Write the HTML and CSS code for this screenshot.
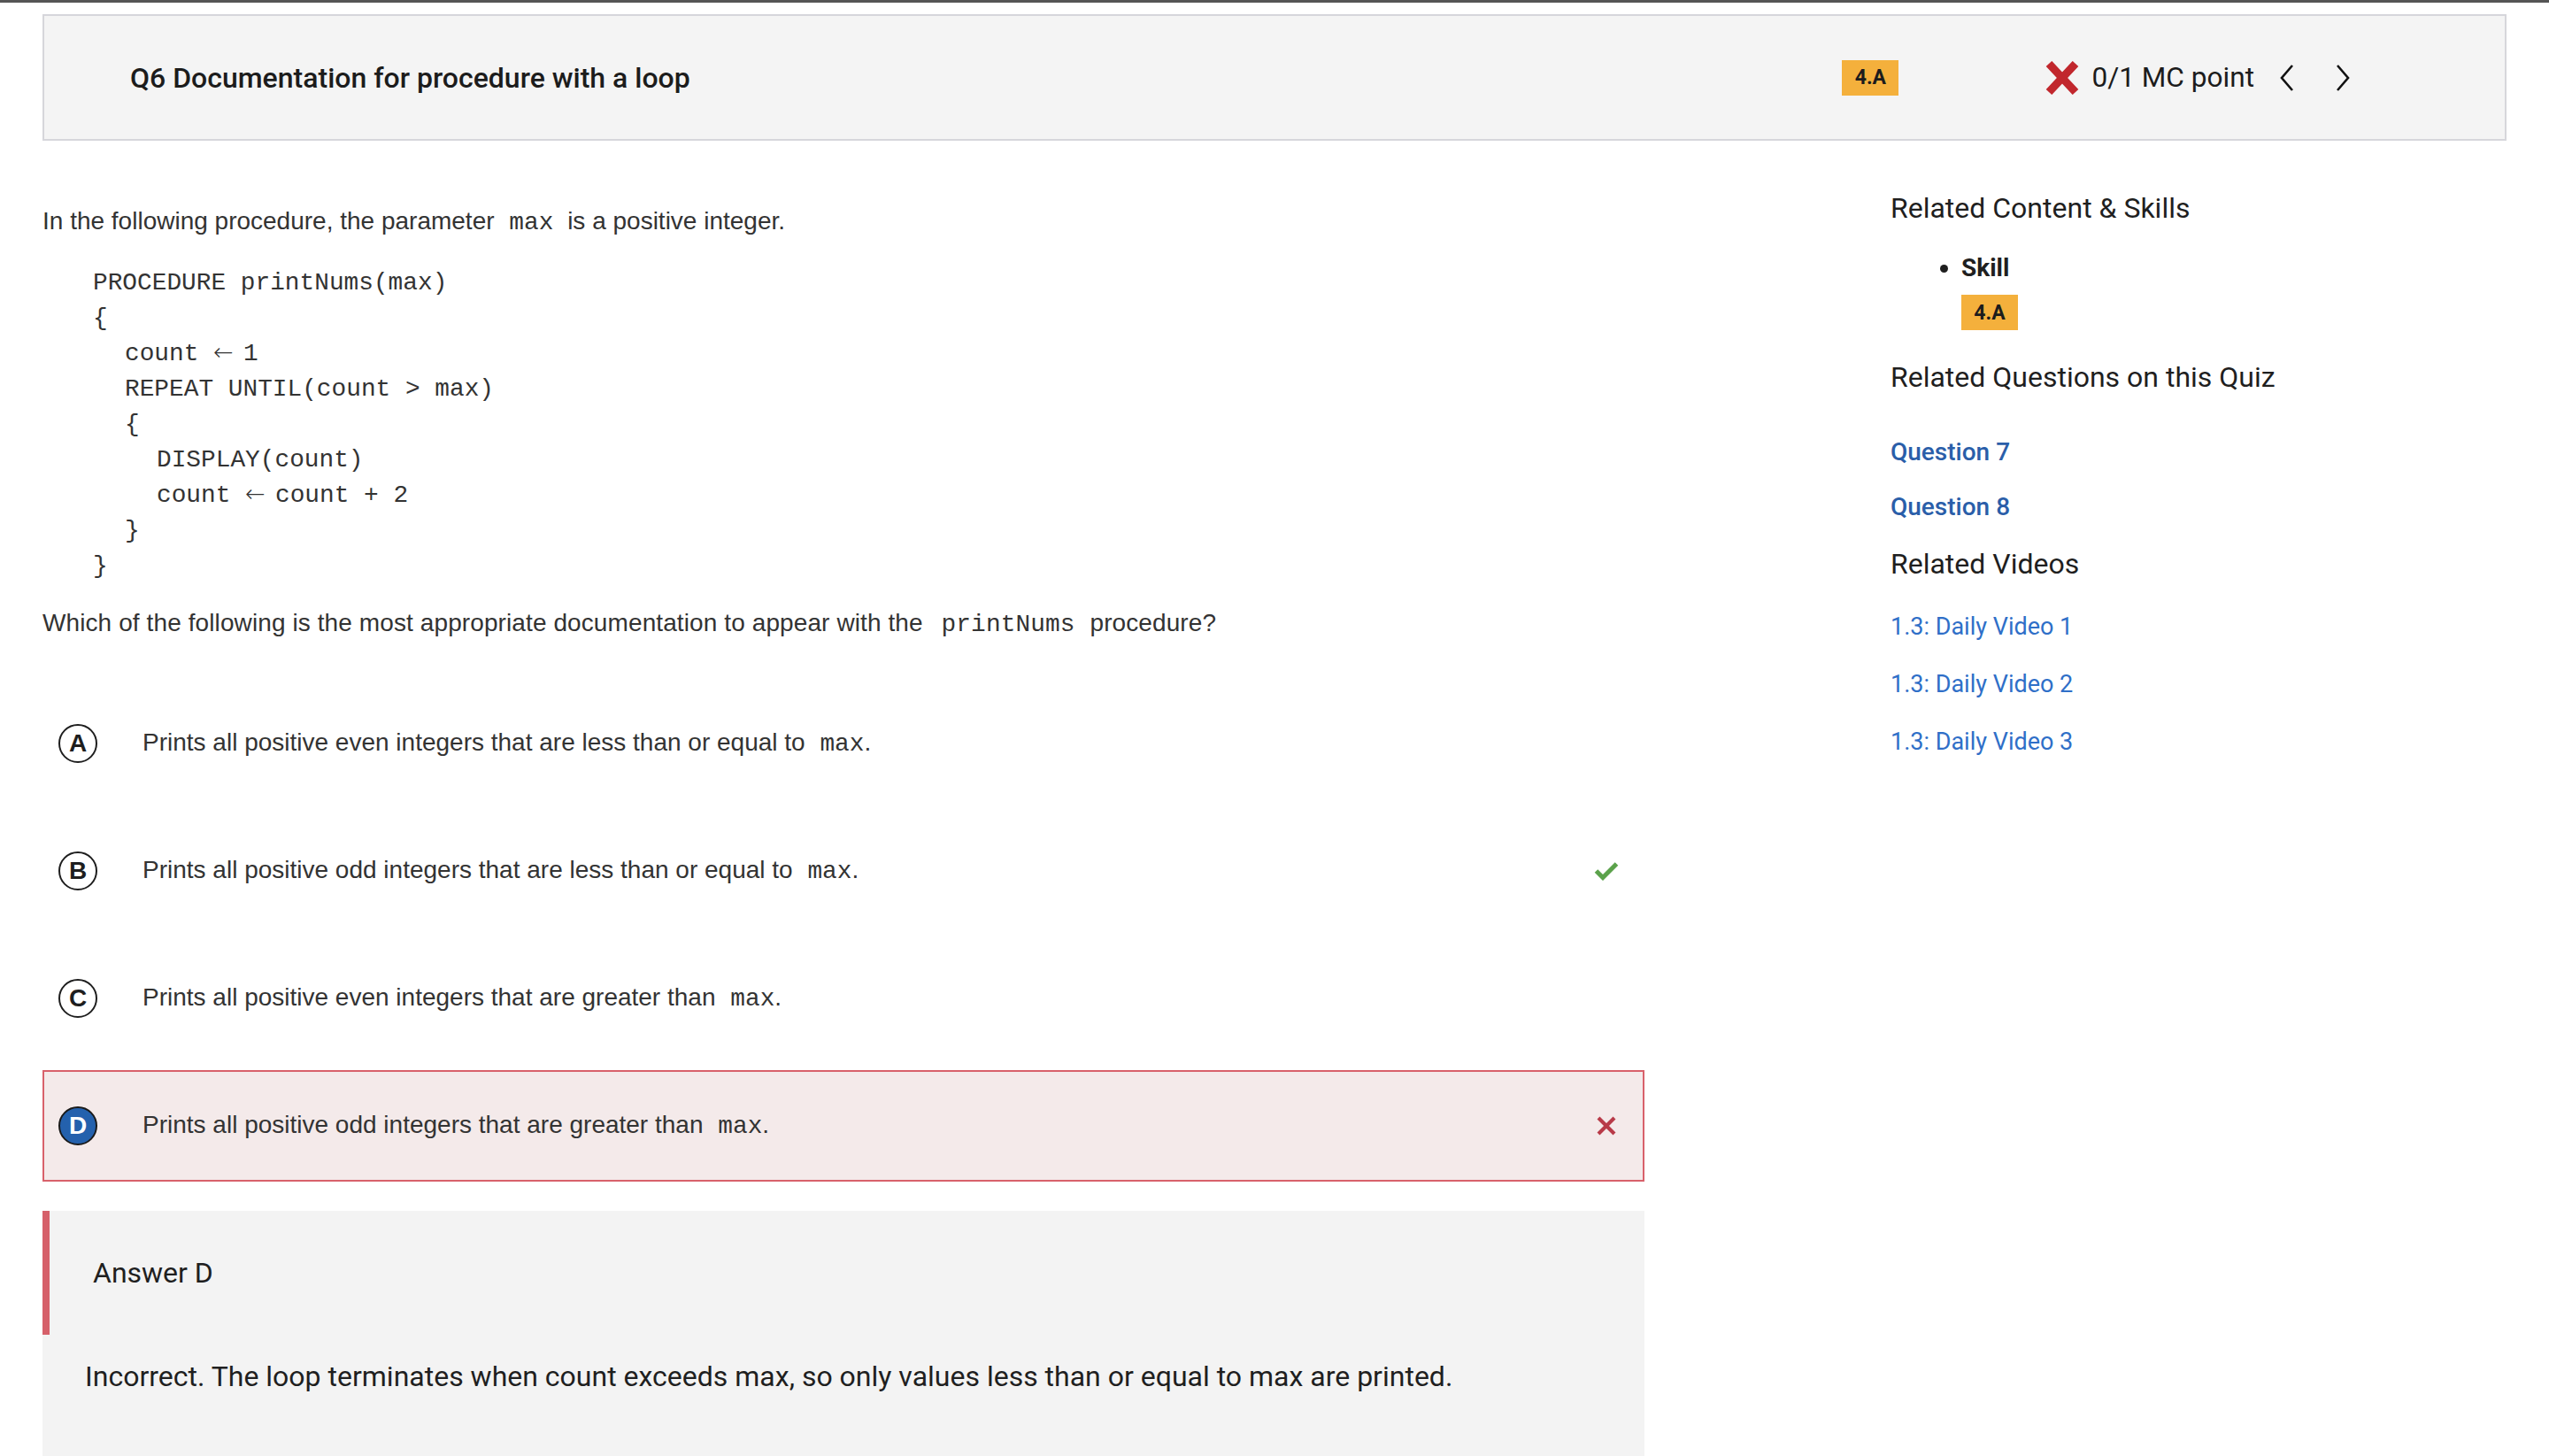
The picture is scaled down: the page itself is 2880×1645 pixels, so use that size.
FILE: index.html
```html
<!DOCTYPE html>
<html lang="en">
<head>
<meta charset="utf-8">
<title>Q6 Documentation for procedure with a loop</title>
<link rel="stylesheet" href="styles.css">
</head>
<body>
<div class="page">
  <header class="qhead">
    <h1 class="qtitle">Q6 Documentation for procedure with a loop</h1>
    <span class="badge badge-head">4.A</span>
    <div class="score">
      <svg class="score-x" width="40" height="38" viewBox="0 0 40 38"><path d="M5 3 L35 35 M35 3 L5 35" stroke="#c1272d" stroke-width="9" fill="none"/></svg>
      <span class="score-text">0/1 MC point</span>
    </div>
    <button class="nav nav-prev" aria-label="Previous"><svg width="18" height="30" viewBox="0 0 18 30"><path d="M15 1 L3 15 L15 29" stroke="#111" stroke-width="2.6" fill="none"/></svg></button>
    <button class="nav nav-next" aria-label="Next"><svg width="18" height="30" viewBox="0 0 18 30"><path d="M3 1 L15 15 L3 29" stroke="#111" stroke-width="2.6" fill="none"/></svg></button>
  </header>

  <div class="layout">
    <main class="question">
      <p class="stem">In the following procedure, the parameter <code class="ic">max</code> is a positive integer.</p>
      <div class="code">
        <div class="cl">PROCEDURE printNums(max)</div>
        <div class="cl">{</div>
        <div class="cl i1">count <span class="arr">←</span> 1</div>
        <div class="cl i1">REPEAT UNTIL(count &gt; max)</div>
        <div class="cl i1">{</div>
        <div class="cl i2">DISPLAY(count)</div>
        <div class="cl i2">count <span class="arr">←</span> count + 2</div>
        <div class="cl i1">}</div>
        <div class="cl">}</div>
      </div>
      <p class="stem ask">Which of the following is the most appropriate documentation to appear with the <code class="ic">printNums</code> procedure?</p>

      <div class="options">
        <div class="opt">
          <span class="letter">A</span>
          <span class="opt-text">Prints all positive even integers that are less than or equal to <code class="ic">max</code>.</span>
        </div>
        <div class="opt">
          <span class="letter">B</span>
          <span class="opt-text">Prints all positive odd integers that are less than or equal to <code class="ic">max</code>.</span>
          <svg class="mark" width="28" height="22" viewBox="0 0 28 22"><path d="M2.5 11 L10 18.5 L25.5 3" stroke="#5ba24b" stroke-width="5" fill="none"/></svg>
        </div>
        <div class="opt">
          <span class="letter">C</span>
          <span class="opt-text">Prints all positive even integers that are greater than <code class="ic">max</code>.</span>
        </div>
        <div class="opt opt-wrong">
          <span class="letter letter-sel">D</span>
          <span class="opt-text">Prints all positive odd integers that are greater than <code class="ic">max</code>.</span>
          <svg class="mark mark-x" width="24" height="22" viewBox="0 0 24 22"><path d="M3 2 L21 20 M21 2 L3 20" stroke="#b83a48" stroke-width="4.2" fill="none"/></svg>
        </div>
      </div>

      <section class="answer">
        <div class="answer-head">Answer D</div>
        <div class="answer-body">Incorrect. The loop terminates when count exceeds max, so only values less than or equal to max are printed.</div>
      </section>
    </main>

    <aside class="side">
      <h2 class="side-h first">Related Content &amp; Skills</h2>
      <ul class="skills">
        <li>Skill</li>
      </ul>
      <span class="badge badge-side">4.A</span>
      <h2 class="side-h h-q">Related Questions on this Quiz</h2>
      <a class="qlink q7" href="#">Question 7</a>
      <a class="qlink q8" href="#">Question 8</a>
      <h2 class="side-h h-v">Related Videos</h2>
      <a class="vlink v1" href="#">1.3: Daily Video 1</a>
      <a class="vlink" href="#">1.3: Daily Video 2</a>
      <a class="vlink" href="#">1.3: Daily Video 3</a>
    </aside>
  </div>
</div>
</body>
</html>
```

FILE: styles.css
```css
html, body {
  margin: 0;
  padding: 0;
  background: #ffffff;
}
body {
  border-top: 3px solid #555555;
  font-family: Roboto, "Liberation Sans", Arial, sans-serif;
  color: #1f1f1f;
  overflow: hidden;
}
.page {
  padding: 13px 48px 0 48px;
}

/* header */
.qhead {
  display: flex;
  align-items: center;
  height: 139px;
  background: #f4f4f4;
  border: 2px solid #d6d6db;
  padding: 0 174px 0 97px;
}
.qtitle {
  flex: 1;
  margin: 0;
  font-size: 32px;
  font-weight: 500;
  color: #1c1c1c;
  line-height: 40px;
}
.badge {
  display: inline-flex;
  align-items: center;
  justify-content: center;
  background: #f4b03c;
  color: #1c1c1c;
  font-family: Roboto, sans-serif;
  font-weight: 700;
  font-size: 23px;
  width: 64px;
  height: 40px;
}
.badge-head {
  margin-right: 165px;
}
.score {
  display: flex;
  align-items: center;
}
.score-x {
  display: block;
  margin-right: 13px;
}
.score-text {
  font-size: 31.6px;
  color: #1c1c1c;
  line-height: 40px;
}
.nav {
  background: none;
  border: 0;
  padding: 0;
  display: flex;
  align-items: center;
}
.nav-prev { margin-left: 28px; }
.nav-next { margin-left: 45px; }

/* main layout */
.layout {
  display: grid;
  grid-template-columns: 65% 25%;
  column-gap: 10%;
  margin-top: 56px;
}

.question {
  padding-top: 15px;
  font-family: "Liberation Sans", Arial, sans-serif;
  color: #333333;
}
.stem {
  margin: 0;
  font-size: 28px;
  line-height: 40px;
}
.ic {
  font-family: "Liberation Mono", "Courier New", monospace;
  font-size: 27.8px;
  padding: 0 8px 0 9px;
  color: #333;
}
.ask .ic {
  padding: 0 9px 0 13px;
}
.ask {
  margin-top: 24px;
  letter-spacing: 0.1px;
}
.opt-text .ic {
  padding-right: 0;
}
.code {
  margin-top: 28px;
  padding-left: 57px;
  font-family: "Liberation Mono", "Courier New", monospace;
  font-size: 27.8px;
  line-height: 40px;
  color: #333333;
}
.cl {
  white-space: pre;
  height: 40px;
}
.cl.i1 { padding-left: 36px; }
.cl.i2 { padding-left: 72px; }
.arr {
  display: inline-block;
  width: 1ch;
  font-family: "DejaVu Sans", sans-serif;
  font-size: 27px;
  font-weight: 300;
  line-height: 1;
  overflow: visible;
  white-space: nowrap;
}

.options {
  margin-top: 51px;
  display: flex;
  flex-direction: column;
  gap: 18px;
}
.opt {
  display: flex;
  align-items: center;
  height: 126px;
  box-sizing: border-box;
  padding: 0 27px 0 18px;
  border: 2px solid transparent;
}
.opt-wrong {
  background: #f4eaea;
  border-color: #d8616b;
}
.opt-wrong .mark-x {
  margin-right: 2px;
}
.letter {
  flex: none;
  box-sizing: border-box;
  width: 44px;
  height: 44px;
  border: 2px solid #1e1e1e;
  border-radius: 50%;
  display: flex;
  align-items: center;
  justify-content: center;
  font-family: "Liberation Sans", Arial, sans-serif;
  font-weight: 700;
  font-size: 28px;
  color: #1e1e1e;
  margin-left: -2px;
}
.letter-sel {
  background: #2461ad;
  color: #ffffff;
  border-color: #1a1a1a;
}
.opt-text {
  flex: 1;
  margin-left: 51px;
  font-size: 28px;
  line-height: 40px;
  color: #333333;
}
.mark {
  flex: none;
  display: block;
}

/* answer */
.answer {
  margin-top: 33px;
  background: #f3f3f3;
  padding-bottom: 120px;
}
.answer-head {
  height: 140px;
  box-sizing: border-box;
  border-left: 8px solid #d6606a;
  padding-left: 49px;
  display: flex;
  align-items: center;
  font-family: Roboto, sans-serif;
  font-size: 32px;
  color: #1f1f1f;
}
.answer-body {
  padding: 27px 0 0 48px;
  font-family: Roboto, sans-serif;
  font-size: 32px;
  line-height: 40px;
  color: #1f1f1f;
}

/* sidebar */
.side {
  display: flex;
  flex-direction: column;
  align-items: flex-start;
  font-family: Roboto, sans-serif;
}
.side-h {
  margin: 0;
  font-size: 32px;
  font-weight: 400;
  line-height: 40px;
  color: #1f1f1f;
}
.skills {
  margin: 28px 0 0 0;
  padding-left: 80px;
  font-size: 28px;
  font-weight: 700;
  line-height: 40px;
  color: #1f1f1f;
}
.badge-side {
  margin-left: 80px;
  margin-top: 10px;
}
.h-q { margin-top: 33px; }
.qlink {
  font-size: 28px;
  font-weight: 500;
  line-height: 40px;
  color: #2a5ea9;
  text-decoration: none;
}
.q7 { margin-top: 45px; }
.q8 { margin-top: 22px; }
.h-v { margin-top: 24px; }
.vlink {
  font-size: 27px;
  line-height: 40px;
  color: #2f6fc8;
  text-decoration: none;
  margin-top: 25px;
}
.v1 { margin-top: 31px; }
```
